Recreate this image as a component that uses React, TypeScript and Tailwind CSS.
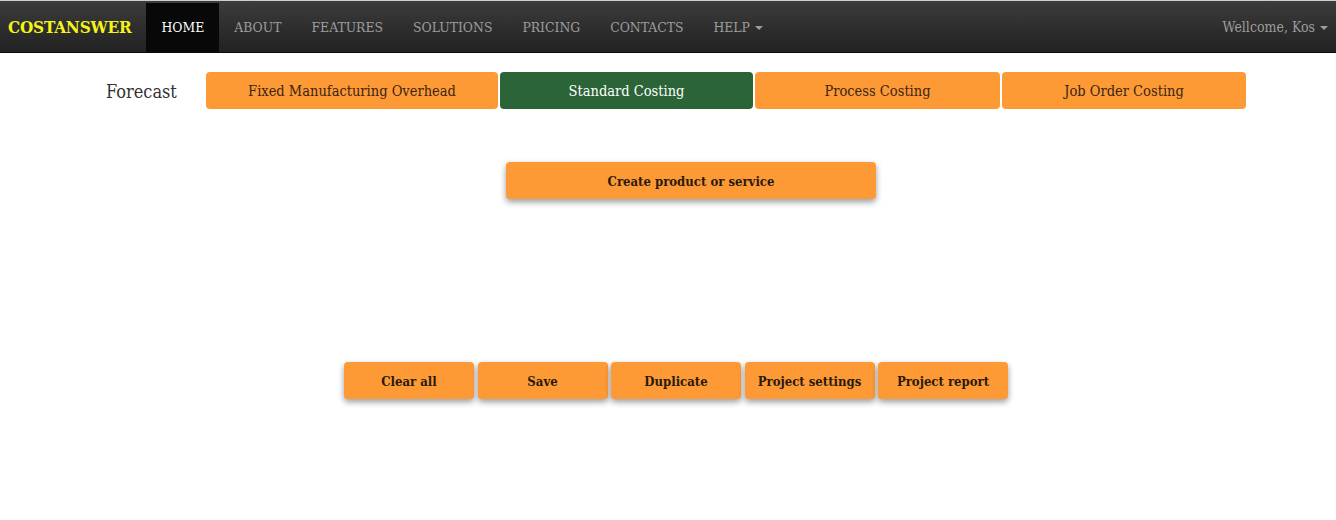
const navItems = ["ABOUT", "FEATURES", "SOLUTIONS", "PRICING", "CONTACTS"];

const tabs = [
    { label: "Fixed Manufacturing Overhead", w: "w-[292px]", active: false },
    { label: "Standard Costing", w: "w-[253px]", active: true },
    { label: "Process Costing", w: "w-[245px]", active: false },
    { label: "Job Order Costing", w: "w-[244px]", active: false },
];

const actions = ["Clear all", "Save", "Duplicate", "Project settings", "Project report"];

const Caret = () => (
    <span className="inline-block ml-[5px] align-middle w-0 h-0 border-l-[4px] border-r-[4px] border-t-[4px] border-l-transparent border-r-transparent border-t-current" />
);

export default function App() {
    return (
        <div className="min-h-[520px] bg-white font-[family-name:DejaVu_Serif_Condensed,DejaVu_Serif,serif]">
            {/* Navbar */}
            <nav className="h-[53px] pt-[2px] flex items-stretch border-t border-t-[#cfcfcf] border-b border-b-[#080808] bg-gradient-to-b from-[#3c3c3c] to-[#222222]">
                <div className="pl-[8px] pr-[15px] flex items-center text-[17px] font-bold text-[#f4f418] tracking-[-0.2px]">
                    COSTANSWER
                </div>
                <div className="flex items-stretch text-[13.8px]">
                    <div className="px-[15px] flex items-center bg-[#080808] text-white">HOME</div>
                    {navItems.map((item) => (
                        <div key={item} className="px-[15px] flex items-center text-[#9d9d9d]">
                            {item}
                        </div>
                    ))}
                    <div className="px-[15px] flex items-center text-[#9d9d9d]">
                        HELP
                        <Caret />
                    </div>
                </div>
                <div className="ml-auto pr-[8px] flex items-center text-[14px] text-[#9d9d9d]">
                    Wellcome, Kos
                    <Caret />
                </div>
            </nav>

            {/* Tabs */}
            <div className="mt-[19px] flex items-center">
                <div className="ml-[106px] w-[100px] pt-[2px] text-[18px] text-[#333]">Forecast</div>
                <div className="flex gap-[2px]">
                    {tabs.map((tab) => (
                        <div
                            key={tab.label}
                            className={`${tab.w} h-[37px] pt-[2px] rounded-[4px] flex items-center justify-center text-[14.5px] ${tab.active ? "bg-[#2a6437] text-white" : "bg-[#fe9a35] text-[#3a2512]"}`}
                        >
                            {tab.label}
                        </div>
                    ))}
                </div>
            </div>

            {/* Create */}
            <div className="mt-[53px] flex">
                <button className="ml-[506px] w-[370px] h-[37px] pt-[2px] rounded-[4px] bg-[#fe9a35] text-[13px] font-bold text-[#2a1a0c] shadow-[0_3px_6px_rgba(0,0,0,0.4)]">
                    Create product or service
                </button>
            </div>

            {/* Actions */}
            <div className="mt-[163px] ml-[344px] flex gap-[3.5px]">
                {actions.map((a) => (
                    <button
                        key={a}
                        className="w-[130px] h-[37px] pt-[2px] rounded-[4px] bg-[#fe9a35] text-[13px] font-bold text-[#2a1a0c] shadow-[0_3px_6px_rgba(0,0,0,0.4)]"
                    >
                        {a}
                    </button>
                ))}
            </div>
        </div>
    );
}
